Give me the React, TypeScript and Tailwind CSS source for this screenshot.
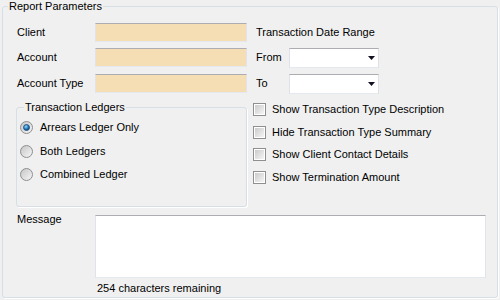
function TextBox({ className }: { className: string }) {
  return (
    <div
      className={
        "border border-t-[#abadb3] border-x-[#e2e3ea] border-b-[#e3e9ef] " + className
      }
    />
  );
}

function Combo() {
  return (
    <div className="self-start w-[90px] h-[20px] bg-white border border-t-[#abadb3] border-x-[#dfe0e8] border-b-[#e3e9ef] flex items-center justify-end pr-[3px]">
      <svg width="7" height="4" viewBox="0 0 7 4">
        <polygon points="0,0 7,0 3.5,4" fill="#111122" />
      </svg>
    </div>
  );
}

function Radio({ checked, label, id }: { checked?: boolean; label: string; id: string }) {
  return (
    <div className="flex items-center h-[16px]">
      <svg width="13" height="13" viewBox="0 0 13 13">
        <defs>
          <linearGradient id={"rg" + id} x1="0" y1="0" x2="1" y2="1">
            <stop offset="0" stopColor="#c4c4c4" />
            <stop offset="1" stopColor="#f8f8f8" />
          </linearGradient>
          <radialGradient id={"dot" + id} cx="0.4" cy="0.35" r="0.65">
            <stop offset="0" stopColor="#9ad8f8" />
            <stop offset="0.55" stopColor="#2b82c4" />
            <stop offset="1" stopColor="#0c4673" />
          </radialGradient>
        </defs>
        <circle cx="6.5" cy="6.5" r="6" fill={"url(#rg" + id + ")"} stroke="#8e8f8f" />
        {checked && (
          <circle cx="6.5" cy="6.5" r="3" fill={"url(#dot" + id + ")"} stroke="#1b4d7b" strokeWidth="0.8" />
        )}
      </svg>
      <span className="ml-[7px]">{label}</span>
    </div>
  );
}

function Check({ label }: { label: string }) {
  return (
    <div className="flex items-center h-[13px]">
      <div className="w-[13px] h-[13px] border border-[#8e8f8f] bg-white p-[1px]">
        <div className="w-[9px] h-[9px] bg-gradient-to-br from-[#cbcbcb] to-[#f5f5f5]" />
      </div>
      <span className="ml-[6px]">{label}</span>
    </div>
  );
}

export default function App() {
  return (
    <div className="w-[500px] h-[300px] bg-[#f0f0f0] text-[11px] leading-[13px] text-black font-['Liberation_Sans',Arial,sans-serif] pl-[2px]">
      <fieldset className="w-[496px] h-[298px] m-0 p-0 border border-[#d5dfe5] rounded-[3px] shadow-[1px_1px_0_#fff]">
        <legend className="ml-[5px] px-[1px]">Report Parameters</legend>
        <div className="pt-[10px] pl-[14px]">
          <div className="flex items-center h-[19px]">
            <span className="w-[78px]">Client</span>
            <TextBox className="w-[152px] h-[19px] bg-[#f5deb3]" />
            <span className="ml-[9px]">Transaction Date Range</span>
          </div>
          <div className="flex items-center h-[19px] mt-[6px]">
            <span className="w-[78px]">Account</span>
            <TextBox className="w-[152px] h-[19px] bg-[#f5deb3]" />
            <span className="ml-[9px] w-[33px]">From</span>
            <Combo />
          </div>
          <div className="flex items-center h-[19px] mt-[7px]">
            <span className="w-[78px]">Account Type</span>
            <TextBox className="w-[152px] h-[19px] bg-[#f5deb3]" />
            <span className="ml-[9px] w-[33px]">To</span>
            <Combo />
          </div>

          <div className="flex mt-[8px]">
            <fieldset className="-ml-[1px] w-[231px] h-[106px] m-0 p-0 border border-[#d5dfe5] rounded-[3px] shadow-[1px_1px_0_#fff]">
              <legend className="ml-[7px] px-[1px]">Transaction Ledgers</legend>
              <div className="pt-[5px] pl-[3px] flex flex-col">
                <Radio id="a" checked label="Arrears Ledger Only" />
                <div className="mt-[8px]">
                  <Radio id="b" label="Both Ledgers" />
                </div>
                <div className="mt-[7px]">
                  <Radio id="c" label="Combined Ledger" />
                </div>
              </div>
            </fieldset>
            <div className="ml-[6px] pt-[2px] flex flex-col">
              <Check label="Show Transaction Type Description" />
              <div className="mt-[10px]">
                <Check label="Hide Transaction Type Summary" />
              </div>
              <div className="mt-[9px]">
                <Check label="Show Client Contact Details" />
              </div>
              <div className="mt-[10px]">
                <Check label="Show Termination Amount" />
              </div>
            </div>
          </div>

          <div className="flex mt-[8px]">
            <span className="w-[78px] -mt-[2px]">Message</span>
            <TextBox className="w-[391px] h-[63px] bg-white" />
          </div>
          <div className="mt-[4px] ml-[80px]">254 characters remaining</div>
        </div>
      </fieldset>
    </div>
  );
}
